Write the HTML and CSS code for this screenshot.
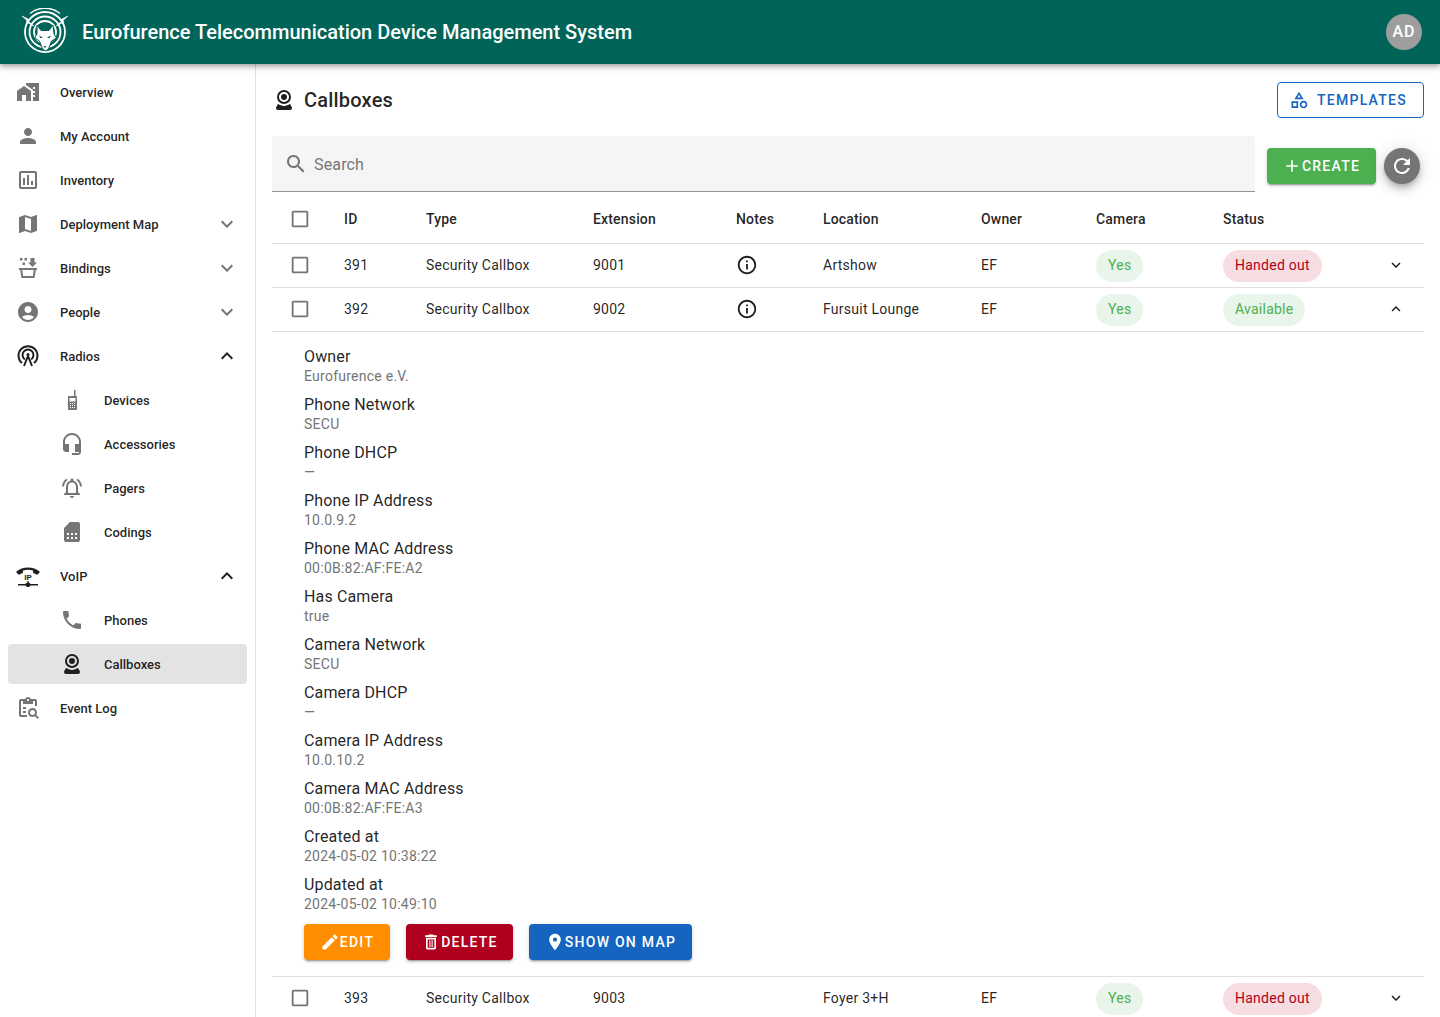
FILE: index.html
```html
<!DOCTYPE html>
<html>
<head>
  <meta charset="UTF-8">
  <title>Callboxes</title>
  <link rel="stylesheet" href="styles.css">
</head>
<body>
  <svg class="defs" width="0" height="0">
    <symbol id="i-down" viewBox="0 0 24 24"><path d="M16.59 8.59 12 13.17 7.41 8.59 6 10l6 6 6-6z"/></symbol>
    <symbol id="i-up" viewBox="0 0 24 24"><path d="m12 8-6 6 1.41 1.41L12 10.83l4.59 4.58L18 14z"/></symbol>
    <symbol id="i-webcam" viewBox="0 0 24 24"><path d="M12,2A7,7 0 0,1 19,9A7,7 0 0,1 12,16A7,7 0 0,1 5,9A7,7 0 0,1 12,2M12,4A5,5 0 0,0 7,9A5,5 0 0,0 12,14A5,5 0 0,0 17,9A5,5 0 0,0 12,4M12,6A3,3 0 0,1 15,9A3,3 0 0,1 12,12A3,3 0 0,1 9,9A3,3 0 0,1 12,6M6,22A2,2 0 0,1 4,20C4,19.62 4.1,19.27 4.29,18.97L6.11,15.81C7.69,17.17 9.75,18 12,18C14.25,18 16.31,17.17 17.89,15.81L19.71,18.97C19.9,19.27 20,19.62 20,20A2,2 0 0,1 18,22H6Z"/></symbol>
    <symbol id="i-box" viewBox="0 0 24 24"><path d="M19 5v14H5V5h14m0-2H5c-1.1 0-2 .9-2 2v14c0 1.1.9 2 2 2h14c1.1 0 2-.9 2-2V5c0-1.1-.9-2-2-2z"/></symbol>
    <symbol id="i-info" viewBox="0 0 24 24"><path d="M11 7h2v2h-2zm0 4h2v6h-2zm1-9C6.48 2 2 6.48 2 12s4.48 10 10 10 10-4.48 10-10S17.52 2 12 2zm0 18c-4.41 0-8-3.59-8-8s3.59-8 8-8 8 3.59 8 8-3.59 8-8 8z"/></symbol>
  </svg>

  <header class="appbar">
    <svg class="logo" viewBox="0 0 48 48" fill="none" stroke="#fff">
      <path d="M9 5.500A24 24 0 0 1 39 5.500" stroke-width="1.500"/>
      <circle cx="24" cy="24" r="20" stroke-width="1.800"/>
      <circle cx="24" cy="24" r="15.500" stroke-width="1.800"/>
      <circle cx="24" cy="24" r="11" stroke-width="1.800"/>
      <path d="M1 8l7 3.500-1 1.500 6 5-8-4 1-1.500zM47 8l-7 3.500 1 1.500-6 5 8-4-1-1.500z" fill="#fff" stroke="#fff" stroke-width=".6"/>
      <path d="M16 17l4 5.500h8l4-5.500 1 9 2.500 4-5 3-3 8-3 2-3-2-3-8-5-3 2.500-4z" fill="#fff" stroke="#006458" stroke-width="1"/>
      <path d="M18 27.500l4 2-2.500.7zM30 27.500l-4 2 2.500.7zM22.500 38h3L24 40z" fill="#006458" stroke="none"/>
    </svg>
    <div class="appbar-title">Eurofurence Telecommunication Device Management System</div>
    <div class="avatar">AD</div>
  </header>

  <div class="layout">
    <nav class="sidebar">
      <a class="nav-item">
        <svg class="nav-icon" viewBox="0 0 24 24"><path d="M1 11v10h5v-6h4v6h5V11L8 6z"/><path d="M10 3v1.97l7 5V11h2v2h-2v2h2v2h-2v4h6V3H10zm9 6h-2V7h2v2z"/></svg>
        <span>Overview</span>
      </a>
      <a class="nav-item">
        <svg class="nav-icon" viewBox="0 0 24 24"><path d="M12 12c2.21 0 4-1.79 4-4s-1.79-4-4-4-4 1.79-4 4 1.79 4 4 4zm0 2c-2.67 0-8 1.34-8 4v2h16v-2c0-2.66-5.33-4-8-4z"/></svg>
        <span>My Account</span>
      </a>
      <a class="nav-item">
        <svg class="nav-icon" viewBox="0 0 24 24"><path d="M19 3H5c-1.100 0-2 .9-2 2v14c0 1.100.9 2 2 2h14c1.100 0 2-.9 2-2V5c0-1.100-.9-2-2-2zm0 16H5V5h14v14z"/><path d="M7 10h2v7H7zm4-3h2v10h-2zm4 6h2v4h-2z"/></svg>
        <span>Inventory</span>
      </a>
      <a class="nav-item">
        <svg class="nav-icon" viewBox="0 0 24 24"><path d="m20.5 3-.16.03L15 5.1 9 3 3.36 4.9c-.21.07-.36.25-.36.48V20.500c0 .28.22.5.5.5l.16-.03L9 18.900l6 2.100 5.640-1.900c.21-.07.36-.25.36-.48V3.500c0-.28-.22-.5-.5-.5zM15 19l-6-2.110V5l6 2.110V19z"/></svg>
        <span>Deployment Map</span>
        <svg class="nav-arrow"><use href="#i-down"/></svg>
      </a>
      <a class="nav-item">
        <svg class="nav-icon" viewBox="0 0 24 24"><path d="M4 2h2.500v2.500H4zM8.500 2H11v2.500H8.500zM6.500 6.500H9V9H6.500zM14.500 2h4v4.500H21L16.500 11 12 6.500h2.500z"/><path fill-rule="evenodd" d="M3 12h18v2h-1.200l-1.300 8h-13L4.200 14H3zm3.200 2 1 6h9.600l1-6z"/></svg>
        <span>Bindings</span>
        <svg class="nav-arrow"><use href="#i-down"/></svg>
      </a>
      <a class="nav-item">
        <svg class="nav-icon" viewBox="0 0 24 24"><path d="M12 2C6.480 2 2 6.480 2 12s4.480 10 10 10 10-4.480 10-10S17.520 2 12 2zm0 4c1.930 0 3.500 1.570 3.500 3.500S13.930 13 12 13s-3.500-1.570-3.500-3.500S10.070 6 12 6zm0 14c-2.030 0-4.430-.82-6.140-2.880C7.550 15.800 9.680 15 12 15s4.450.8 6.140 2.120C16.430 19.180 14.030 20 12 20z"/></svg>
        <span>People</span>
        <svg class="nav-arrow"><use href="#i-down"/></svg>
      </a>
      <a class="nav-item open">
        <svg class="nav-icon" viewBox="0 0 24 24" fill="none" stroke="#1f1f1f" stroke-width="2"><path d="M6 19a9.500 9.500 0 1 1 12 0"/><path d="M8.800 15.500a5.500 5.500 0 1 1 6.400 0"/><path d="M8 22l4-10 4 10"/><circle cx="12" cy="10.500" r="1.500" fill="#1f1f1f" stroke="none"/></svg>
        <span>Radios</span>
        <svg class="nav-arrow"><use href="#i-up"/></svg>
      </a>
      <a class="nav-item sub">
        <svg class="nav-icon" viewBox="0 0 24 24"><path fill-rule="evenodd" d="M14 2h1.500v6h.5c.6 0 1 .4 1 1v12c0 .6-.4 1-1 1H9c-.6 0-1-.4-1-1V9c0-.6.4-1 1-1h5zM9.500 10v3.500h6V10zM10 15v1h1v-1zm2 0v1h1v-1zm2 0v1h1v-1zm-4 2v1h1v-1zm2 0v1h1v-1zm2 0v1h1v-1zm-4 2v1h1v-1zm2 0v1h1v-1zm2 0v1h1v-1z"/></svg>
        <span>Devices</span>
      </a>
      <a class="nav-item sub">
        <svg class="nav-icon" viewBox="0 0 24 24"><path d="M12 1c-4.970 0-9 4.030-9 9v7c0 1.660 1.340 3 3 3h3v-8H5v-2c0-3.870 3.130-7 7-7s7 3.130 7 7v2h-4v8h4v1h-7v2h6c1.660 0 3-1.340 3-3V10c0-4.970-4.030-9-9-9z"/></svg>
        <span>Accessories</span>
      </a>
      <a class="nav-item sub">
        <svg class="nav-icon" viewBox="0 0 24 24"><path d="M7.580 4.080 6.150 2.650C3.750 4.480 2.170 7.300 2.030 10.500h2c.15-2.650 1.510-4.970 3.550-6.420zm12.390 6.420h2c-.15-3.200-1.730-6.020-4.120-7.850l-1.420 1.430c2.020 1.450 3.390 3.770 3.540 6.420zM18 11c0-3.070-1.640-5.640-4.500-6.320V4c0-.83-.67-1.500-1.500-1.500s-1.500.67-1.500 1.500v.68C7.630 5.360 6 7.920 6 11v5l-2 2v1h16v-1l-2-2v-5zm-2 6H8v-6c0-2.480 1.510-4.500 4-4.500s4 2.020 4 4.500v6zm-4 5c.14 0 .27-.01.4-.04.65-.14 1.180-.58 1.440-1.180.1-.24.15-.5.15-.78h-4c.01 1.100.9 2 2.010 2z"/></svg>
        <span>Pagers</span>
      </a>
      <a class="nav-item sub">
        <svg class="nav-icon" viewBox="0 0 24 24"><path d="M19.990 4c0-1.100-.89-2-1.990-2h-8L4 8v12c0 1.100.9 2 2 2h12c1.100 0 2-.9 2-2l-.01-16zM9 19H7v-2h2v2zm8 0h-2v-2h2v2zm-8-4H7v-2h2v2zm4 4h-2v-2h2v2zm0-4h-2v-2h2v2zm4 0h-2v-2h2v2z"/></svg>
        <span>Codings</span>
      </a>
      <a class="nav-item open">
        <svg class="nav-icon" viewBox="0 0 24 24"><path d="M12 3.500C7.500 3.500 3.500 5 .5 7.500c-.3.3-.3.7 0 1l2 2c.3.3.7.3 1 .1l3-1.500c.3-.2.5-.5.5-.8V6.500C8.500 6 10.200 5.700 12 5.700s3.500.3 5 .8v1.800c0 .3.2.6.5.8l3 1.500c.3.2.7.2 1-.1l2-2c.3-.3.3-.7 0-1C20.500 5 16.500 3.500 12 3.500z"/><text class="voip-ip" x="12" y="15.500">IP</text><path d="M2 20h7.500c.3-.8 1.300-1.500 2.500-1.500s2.200.7 2.500 1.500H22v1.500h-7.500c-.3.8-1.300 1.500-2.500 1.500s-2.200-.7-2.500-1.500H2z"/><path d="M11.400 17h1.200v2h-1.200z"/></svg>
        <span>VoIP</span>
        <svg class="nav-arrow"><use href="#i-up"/></svg>
      </a>
      <a class="nav-item sub">
        <svg class="nav-icon" viewBox="0 0 24 24"><path d="M6.620 10.790c1.440 2.830 3.760 5.140 6.590 6.590l2.200-2.200c.27-.27.67-.36 1.020-.24 1.120.37 2.330.57 3.570.57.55 0 1 .45 1 1V20c0 .55-.45 1-1 1-9.390 0-17-7.610-17-17 0-.55.45-1 1-1h3.500c.55 0 1 .45 1 1 0 1.250.2 2.450.57 3.570.11.35.03.74-.25 1.020l-2.200 2.200z"/></svg>
        <span>Phones</span>
      </a>
      <a class="nav-item sub selected">
        <svg class="nav-icon"><use href="#i-webcam"/></svg>
        <span>Callboxes</span>
      </a>
      <a class="nav-item">
        <svg class="nav-icon" viewBox="0 0 24 24"><path d="M5 5h2v3h10V5h2v5h2V5c0-1.100-.9-2-2-2h-4.180C14.400 1.840 13.300 1 12 1s-2.400.84-2.820 2H5c-1.100 0-2 .9-2 2v14c0 1.100.9 2 2 2h6v-2H5V5zm7-2c.55 0 1 .45 1 1s-.45 1-1 1-1-.45-1-1 .45-1 1-1z"/><path d="M7 11h3v2H7zM7 15h3v2H7z"/><path d="M20.300 18.900c.44-.7.7-1.510.7-2.400 0-2.490-2.010-4.500-4.500-4.500S12 14.010 12 16.500s2.010 4.500 4.490 4.500c.88 0 1.700-.26 2.390-.7L21.590 23 23 21.590l-2.700-2.690zm-3.800.1c-1.380 0-2.500-1.120-2.500-2.500s1.120-2.500 2.500-2.500 2.500 1.120 2.500 2.500-1.120 2.500-2.500 2.500z"/></svg>
        <span>Event Log</span>
      </a>
    </nav>

    <main class="main">
      <div class="title-row">
        <svg class="title-icon"><use href="#i-webcam"/></svg>
        <h1>Callboxes</h1>
        <button class="btn outlined">
          <svg viewBox="0 0 24 24"><path d="m12 2-5.500 9h11L12 2zm0 3.840L13.930 9h-3.870L12 5.840zM17.500 13c-2.490 0-4.500 2.010-4.500 4.500s2.010 4.500 4.500 4.500 4.500-2.010 4.500-4.500-2.010-4.500-4.500-4.500zm0 7c-1.380 0-2.500-1.120-2.500-2.500s1.120-2.500 2.500-2.500 2.500 1.120 2.500 2.500-1.120 2.500-2.500 2.500zM3 21.500h8v-8H3v8zm2-6h4v4H5v-4z"/></svg>
          Templates
        </button>
      </div>

      <div class="toolbar">
        <div class="search">
          <svg viewBox="0 0 24 24"><path d="M15.500 14h-.79l-.28-.27C15.410 12.590 16 11.110 16 9.500 16 5.910 13.090 3 9.500 3S3 5.910 3 9.500 5.910 16 9.500 16c1.610 0 3.090-.59 4.230-1.570l.27.28v.79l5 4.990L20.490 19l-4.990-5zm-6 0C7.010 14 5 11.990 5 9.500S7.010 5 9.500 5 14 7.010 14 9.500 11.990 14 9.500 14z"/></svg>
          <span>Search</span>
        </div>
        <button class="btn green">
          <svg viewBox="0 0 24 24"><path d="M19 13h-6v6h-2v-6H5v-2h6V5h2v6h6v2z"/></svg>
          Create
        </button>
        <button class="fab">
          <svg viewBox="0 0 24 24"><path d="M17.650 6.350C16.200 4.900 14.210 4 12 4c-4.420 0-7.990 3.580-7.990 8s3.570 8 7.990 8c3.730 0 6.840-2.550 7.730-6h-2.080c-.82 2.330-3.040 4-5.650 4-3.310 0-6-2.690-6-6s2.690-6 6-6c1.660 0 3.140.69 4.220 1.780L13 11h7V4l-2.350 2.350z"/></svg>
        </button>
      </div>

      <table class="grid">
        <colgroup>
          <col class="c-check"><col class="c-id"><col class="c-type"><col class="c-ext"><col class="c-notes">
          <col class="c-loc"><col class="c-owner"><col class="c-cam"><col class="c-status"><col class="c-more">
        </colgroup>
        <thead>
          <tr>
            <th class="check"><svg><use href="#i-box"/></svg></th>
            <th>ID</th><th>Type</th><th>Extension</th><th>Notes</th><th>Location</th><th>Owner</th><th>Camera</th><th>Status</th><th></th>
          </tr>
        </thead>
        <tbody>
          <tr>
            <td class="check"><svg><use href="#i-box"/></svg></td>
            <td>391</td><td>Security Callbox</td><td>9001</td>
            <td><svg class="info"><use href="#i-info"/></svg></td>
            <td>Artshow</td><td>EF</td>
            <td><span class="chip ok">Yes</span></td>
            <td><span class="chip bad">Handed out</span></td>
            <td class="more"><svg><use href="#i-down"/></svg></td>
          </tr>
          <tr>
            <td class="check"><svg><use href="#i-box"/></svg></td>
            <td>392</td><td>Security Callbox</td><td>9002</td>
            <td><svg class="info"><use href="#i-info"/></svg></td>
            <td>Fursuit Lounge</td><td>EF</td>
            <td><span class="chip ok">Yes</span></td>
            <td><span class="chip ok">Available</span></td>
            <td class="more"><svg><use href="#i-up"/></svg></td>
          </tr>
          <tr>
            <td class="detail" colspan="10">
              <dl class="props">
                <div><dt>Owner</dt><dd>Eurofurence e.V.</dd></div>
                <div><dt>Phone Network</dt><dd>SECU</dd></div>
                <div><dt>Phone DHCP</dt><dd>—</dd></div>
                <div><dt>Phone IP Address</dt><dd>10.0.9.2</dd></div>
                <div><dt>Phone MAC Address</dt><dd>00:0B:82:AF:FE:A2</dd></div>
                <div><dt>Has Camera</dt><dd>true</dd></div>
                <div><dt>Camera Network</dt><dd>SECU</dd></div>
                <div><dt>Camera DHCP</dt><dd>—</dd></div>
                <div><dt>Camera IP Address</dt><dd>10.0.10.2</dd></div>
                <div><dt>Camera MAC Address</dt><dd>00:0B:82:AF:FE:A3</dd></div>
                <div><dt>Created at</dt><dd>2024-05-02 10:38:22</dd></div>
                <div><dt>Updated at</dt><dd>2024-05-02 10:49:10</dd></div>
              </dl>
              <div class="actions">
                <button class="btn orange">
                  <svg viewBox="0 0 24 24"><path d="M3 17.250V21h3.750L17.810 9.940l-3.750-3.750L3 17.250zM20.710 7.040c.39-.39.39-1.020 0-1.410l-2.340-2.340a.9959.9959 0 0 0-1.410 0l-1.830 1.830 3.750 3.750 1.830-1.830z"/></svg>
                  Edit
                </button>
                <button class="btn red">
                  <svg viewBox="0 0 24 24"><path d="M6 19c0 1.100.9 2 2 2h8c1.100 0 2-.9 2-2V7H6v12zM8 9h8v10H8V9zm7.500-5-1-1h-5l-1 1H5v2h14V4z"/><path d="M10 10h1.300v8H10zM12.700 10H14v8h-1.300z"/></svg>
                  Delete
                </button>
                <button class="btn blue">
                  <svg viewBox="0 0 24 24"><path d="M12 2C8.130 2 5 5.130 5 9c0 5.250 7 13 7 13s7-7.750 7-13c0-3.870-3.130-7-7-7zm0 9.500c-1.380 0-2.500-1.120-2.500-2.500s1.120-2.500 2.500-2.500 2.500 1.120 2.500 2.500-1.120 2.500-2.500 2.500z"/></svg>
                  Show on map
                </button>
              </div>
            </td>
          </tr>
          <tr>
            <td class="check"><svg><use href="#i-box"/></svg></td>
            <td>393</td><td>Security Callbox</td><td>9003</td>
            <td></td>
            <td>Foyer 3+H</td><td>EF</td>
            <td><span class="chip ok">Yes</span></td>
            <td><span class="chip bad">Handed out</span></td>
            <td class="more"><svg><use href="#i-down"/></svg></td>
          </tr>
        </tbody>
      </table>
    </main>
  </div>
</body>
</html>
```

FILE: styles.css
```css
* {
  box-sizing: border-box;
}

html, body {
  height: 100%;
}

body {
  margin: 0;
  font-family: Roboto, "Liberation Sans", sans-serif;
  font-size: 14px;
  color: rgba(0, 0, 0, 0.87);
  background: #fff;
  overflow: hidden;
}

.defs {
  position: absolute;
}

.appbar {
  position: relative;
  z-index: 2;
  display: flex;
  align-items: center;
  height: 64px;
  padding: 0 18px 0 21px;
  background: #006458;
  color: #fff;
  box-shadow: 0 2px 4px -1px rgba(0,0,0,.2), 0 4px 5px rgba(0,0,0,.14), 0 1px 10px rgba(0,0,0,.12);
}

.logo {
  width: 48px;
  height: 48px;
  margin-right: 13px;
}

.appbar-title {
  flex: 1;
  font-size: 20px;
  font-weight: 500;
}

.avatar {
  width: 36px;
  height: 36px;
  border-radius: 50%;
  background: #9e9e9e;
  font-size: 16px;
  font-weight: 500;
  letter-spacing: 1px;
  line-height: 36px;
  text-align: center;
}

.layout {
  display: flex;
  height: calc(100% - 64px);
}

/* sidebar */
.sidebar {
  flex: none;
  width: 256px;
  padding-top: 6px;
  border-right: 1px solid #e0e0e0;
}

.nav-item {
  display: flex;
  align-items: center;
  height: 44px;
  padding-left: 16px;
  font-size: 13px;
  font-weight: 500;
  color: rgba(0, 0, 0, 0.87);
}

.nav-icon {
  flex: none;
  width: 24px;
  height: 24px;
  margin-right: 20px;
  fill: #757575;
}

.nav-arrow {
  width: 24px;
  height: 24px;
  margin-left: auto;
  margin-right: 16px;
  fill: #757575;
}

.nav-item.open .nav-icon,
.nav-item.open .nav-arrow,
.nav-item.selected .nav-icon {
  fill: #1f1f1f;
}

.nav-item.open .nav-icon[fill="none"] {
  fill: none;
}

.nav-item.sub {
  padding-left: 60px;
}

.nav-item.selected {
  height: 40px;
  margin: 2px 8px;
  padding-left: 52px;
  border-radius: 4px;
  background: #e3e3e3;
}

.voip-ip {
  font-family: Roboto, sans-serif;
  font-size: 8px;
  font-weight: 700;
  text-anchor: middle;
}

/* main */
.main {
  flex: 1;
  min-width: 0;
  padding: 18px 16px 0;
}

.title-row {
  display: flex;
  align-items: center;
  height: 36px;
}

.title-icon {
  width: 24px;
  height: 24px;
  margin-right: 8px;
  fill: #1f1f1f;
}

h1 {
  flex: 1;
  margin: 0;
  font-size: 20px;
  font-weight: 500;
  letter-spacing: 0.2px;
}

.btn {
  display: inline-flex;
  align-items: center;
  justify-content: center;
  height: 36px;
  padding: 0;
  border: 0;
  border-radius: 4px;
  font-family: inherit;
  font-size: 14px;
  font-weight: 500;
  letter-spacing: 1.25px;
  text-transform: uppercase;
  white-space: nowrap;
  color: #fff;
  box-shadow: 0 3px 1px -2px rgba(0,0,0,.2), 0 2px 2px rgba(0,0,0,.14), 0 1px 5px rgba(0,0,0,.12);
}

.btn svg {
  flex: none;
  width: 20px;
  height: 20px;
  fill: currentColor;
}

.btn.outlined {
  width: 147px;
  padding-right: 5px;
  border: 1px solid #1565c0;
  background: #fff;
  color: #1565c0;
  box-shadow: none;
}

.btn.outlined svg {
  margin-right: 8px;
}

.btn.green { width: 109px; padding-right: 1px; background: #4caf50; }
.btn.orange { width: 86px; background: #ff8f00; }
.btn.red { width: 107px; background: #b00020; }
.btn.blue { width: 163px; background: #1565c0; }

.toolbar {
  display: flex;
  align-items: center;
  gap: 8px;
  height: 56px;
  margin-top: 18px;
}

.toolbar .btn,
.toolbar .fab {
  margin-top: 4px;
}

.search {
  display: flex;
  align-items: center;
  flex: 1;
  height: 56px;
  margin-right: 4px;
  padding: 1px 0 0 12px;
  border-bottom: 1px solid #949494;
  border-radius: 4px 4px 0 0;
  background: #f5f5f5;
  font-size: 16px;
  letter-spacing: 0.15px;
  color: #757575;
}

.search svg {
  width: 24px;
  height: 24px;
  margin-right: 6px;
  fill: #757575;
}

.fab {
  display: flex;
  align-items: center;
  justify-content: center;
  width: 36px;
  height: 36px;
  margin-right: 4px;
  padding: 0;
  border: 0;
  border-radius: 50%;
  background: #757575;
  box-shadow: 0 3px 5px -1px rgba(0,0,0,.2), 0 6px 10px rgba(0,0,0,.14), 0 1px 18px rgba(0,0,0,.12);
}

.fab svg {
  width: 24px;
  height: 24px;
  fill: #fff;
}

/* table */
.grid {
  width: 100%;
  border-collapse: collapse;
  table-layout: fixed;
  letter-spacing: 0.25px;
}

.c-check { width: 56px; }
.c-id { width: 82px; }
.c-type { width: 167px; }
.c-ext { width: 143px; }
.c-notes { width: 87px; }
.c-loc { width: 158px; }
.c-owner { width: 115px; }
.c-cam { width: 127px; }
.c-status { width: 165px; }

.grid th,
.grid td {
  padding: 0 16px;
  border-bottom: 1px solid #e0e0e0;
  text-align: left;
  vertical-align: middle;
}

.grid th {
  height: 51px;
  padding-top: 4px;
  font-weight: 500;
  letter-spacing: 0.17px;
}

.grid td {
  height: 44px;
}

.grid td.check {
  padding: 0 0 0 17px;
}

.grid th.check {
  padding: 4px 0 0 17px;
}

.check svg {
  display: block;
  width: 22px;
  height: 22px;
  fill: #757575;
}

.info {
  display: block;
  width: 22px;
  height: 22px;
  fill: #1f1f1f;
}

.chip {
  display: inline-block;
  height: 32px;
  margin-top: 2px;
  padding: 0 12px;
  border-radius: 16px;
  line-height: 30px;
}

.chip.ok { background: #e9f5ea; color: #4caf50; }
.chip.bad { background: #f5dde1; color: #b00020; }

.grid .more {
  padding: 0;
}

.more svg {
  display: block;
  width: 18px;
  height: 18px;
  margin-left: 15px;
  fill: #1f1f1f;
}

/* expanded row */
.grid .detail {
  height: auto;
  padding: 13px 32px 16px;
}

.props {
  margin: 0;
}

.props div {
  height: 48px;
}

.props dt {
  font-size: 16px;
  line-height: 24px;
  letter-spacing: 0.15px;
}

.props dd {
  margin: 0;
  font-size: 14px;
  line-height: 14px;
  color: #757575;
}

.actions {
  display: flex;
  gap: 16px;
  margin-top: 3px;
}
```
